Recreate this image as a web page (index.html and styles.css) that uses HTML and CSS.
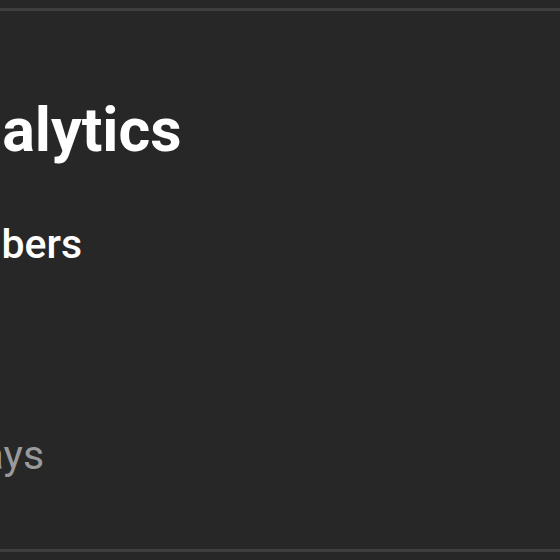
FILE: index.html
```html
<!doctype html>
<html lang="en">
<head>
<meta charset="utf-8">
<title>Analytics</title>
<link rel="stylesheet" href="styles.css">
</head>
<body>

<div class="card">
  <h1 class="card-title">Analytics</h1>
  <div class="card-sub">Members</div>
  <div class="card-note">Last 30 days</div>
</div>

</body>
</html>
```

FILE: styles.css
```css
html, body {
  margin: 0;
  padding: 0;
  background: #272727;
  overflow: hidden;
}
body {
  font-family: Roboto, "Noto Sans", sans-serif;
  color: #fff;
}
.card {
  margin-top: 8px;
  border-top: 3px solid #3e3e3e;
  border-bottom: 3px solid #3e3e3e;
  padding: 89px 0 73px 0;
  white-space: nowrap;
}
.card-title {
  margin: 0 0 0 -72px;
  font-size: 61px;
  font-weight: 700;
  line-height: 1;
}
.card-sub {
  margin: 63px 0 0 -92px;
  font-size: 41px;
  font-weight: 500;
  line-height: 1;
}
.card-note {
  margin: 170px 0 0 -187px;
  font-size: 41px;
  line-height: 1;
  color: #9a9a9a;
}
```
